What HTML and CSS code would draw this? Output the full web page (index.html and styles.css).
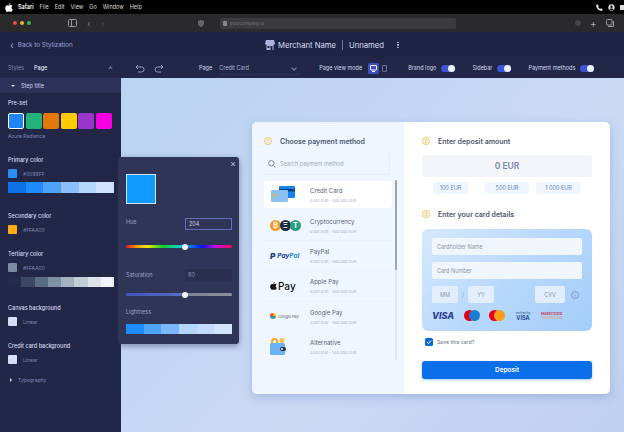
FILE: index.html
```html
<!DOCTYPE html>
<html lang="en">
<head>
    <meta charset="UTF-8">
    <title>Merchant Stylization</title>
    <link rel="stylesheet" href="styles.css">
</head>
<body>
    <!-- Mac menu bar -->
    <div class="menubar">
        <svg class="apple" width="8" height="9" viewBox="0 0 16 18"><path fill="#fff" d="M11 0c.2 1.800-1.400 3.800-3.300 3.700C7.500 2 9.200.2 11 0zM8 5c1 0 2-.9 3.600-.9 1.300 0 2.600.7 3.400 1.800-3 1.700-2.500 5.900.6 7.100-.7 1.800-2.300 4.800-4.100 4.800-1.300 0-1.700-.8-3.300-.8s-2.100.8-3.300.8C2.700 17.800.4 13.700.4 10.300c0-3.500 2.300-5.900 4.600-5.900C6.200 4.400 7.200 5 8 5z"/></svg>
        <b>Safari</b><span>File</span><span>Edit</span><span>View</span><span>Go</span><span>Window</span><span>Help</span>
        <div class="menubar-right">
            <svg width="7" height="7" viewBox="0 0 10 10"><path fill="#ddd" d="M2 0l2 3-1 1c.5 1.200 1.500 2.200 3 3l1-1 3 2-2 2C4 9.500.5 6 0 2z"/></svg>
            <svg width="7" height="7" viewBox="0 0 10 10"><circle cx="5" cy="5" r="4.500" fill="#ddd"/><circle cx="5" cy="4" r="1.700" fill="#000"/><path fill="#000" d="M2 8c1-2 5-2 6 0l-3 1z"/></svg>
            <i class="battery"></i>
        </div>
    </div>

    <!-- Browser toolbar -->
    <div class="browserbar">
        <div class="lights"><i class="red"></i><i class="yellow"></i><i class="green"></i></div>
        <svg class="b-side" width="9" height="8" viewBox="0 0 9 8"><rect x=".5" y=".5" width="8" height="7" rx="1" fill="none" stroke="#999"/><path d="M3.500 1v6" stroke="#999"/></svg>
        <span class="b-arrow">‹</span>
        <span class="b-arrow dim">›</span>
        <svg class="b-shield" width="6" height="7" viewBox="0 0 6 7"><path d="M3 0l3 1v2.500C6 5.500 4 6.500 3 7 2 6.500 0 5.500 0 3.500V1z" fill="#666"/></svg>
        <div class="address"><span class="lock"></span>yourcompany.io</div>
        <div class="b-right">
            <i class="b-dot"></i>
            <span class="b-plus">+</span>
            <svg width="8" height="8" viewBox="0 0 8 8"><rect x=".5" y=".5" width="5.500" height="5.500" rx="1" fill="none" stroke="#999"/><path d="M2 7.500h5.500V2" fill="none" stroke="#999"/></svg>
        </div>
    </div>

    <!-- App header -->
    <header class="appbar">
        <div class="back"><span class="back-arrow">‹</span>Back to Stylization</div>
        <div class="merchant">
            <svg width="10" height="10" viewBox="0 0 10 10"><path fill="#aab4e0" d="M1 0h8l1 3.500c0 1-1 1.500-1.500 1.200V10h-7V4.700C1 5 0 4.500 0 3.500z"/><rect x="2.500" y="6" width="2" height="2" fill="#1f2444"/><rect x="5.500" y="6" width="2" height="4" fill="#1f2444"/></svg>
            <span class="merchant-name">Merchant Name</span>
            <i class="merchant-sep"></i>
            <span>Unnamed</span>
            <span class="kebab"><i></i><i></i><i></i></span>
        </div>
    </header>

    <div class="workspace">
        <!-- Left sidebar -->
        <aside class="sidebar">
            <div class="tabs"><span>Styles</span><b>Page</b><em class="tab-chevron"></em></div>
            <div class="step-row"><i class="tri-down"></i>Step title</div>

            <div class="panel">
                <h4 class="first">Pre-set</h4>
                <div class="presets">
                    <i class="preset active"></i><i class="preset green"></i><i class="preset orange"></i><i class="preset yellow"></i><i class="preset purple"></i><i class="preset pink"></i>
                </div>
                <p class="preset-name">Azure Radiance</p>

                <h4 class="primary">Primary color</h4>
                <div class="color-row"><i class="chip blue"></i>#0099FF</div>
                <div class="shades">
                    <i style="background:#0b73e6"></i><i style="background:#1f8bff"></i><i style="background:#4ea3fb"></i><i style="background:#8cc0fb"></i><i style="background:#b4d6fb"></i><i style="background:#cfe3fd"></i>
                </div>

                <h4 class="secondary">Secondary color</h4>
                <div class="color-row"><i class="chip amber"></i>#FFAA00</div>

                <h4 class="tertiary">Tertiary color</h4>
                <div class="color-row"><i class="chip slate"></i>#FFAA00</div>
                <div class="shades short">
                    <i style="background:#242a4a"></i><i style="background:#3c4863"></i><i style="background:#5a6b84"></i><i style="background:#7f91a6"></i><i style="background:#a3b2c1"></i><i style="background:#c1cdd8"></i><i style="background:#dde4eb"></i><i style="background:#f1f4f8"></i>
                </div>

                <h4 class="canvas-bg">Canvas background</h4>
                <div class="color-row"><i class="chip pale"></i>Linear</div>

                <h4 class="card-bg">Credit card background</h4>
                <div class="color-row"><i class="chip pale"></i>Linear</div>

                <div class="typography"><i class="tri-right"></i>Typography</div>
            </div>
        </aside>

        <div class="main">
            <!-- Top settings row -->
            <div class="settings">
                <div class="history">
                    <svg width="10" height="9" viewBox="0 0 10 9"><path d="M3 1L1 3l2 2M1 3h5.500a2.500 2.500 0 0 1 0 5H3" fill="none" stroke="#8f98c4"/></svg>
                    <svg width="10" height="9" viewBox="0 0 10 9"><path d="M7 1l2 2-2 2M9 3H3.500a2.500 2.500 0 0 0 0 5H7" fill="none" stroke="#8f98c4"/></svg>
                </div>
                <span class="set-label page-label">Page</span>
                <div class="page-select">Credit Card<em class="select-chevron"></em></div>
                <span class="set-label">Page view mode</span>
                <div class="view-mode">
                    <span class="view-btn on"><svg width="7" height="7" viewBox="0 0 7 7"><rect x=".5" y=".5" width="6" height="4.500" rx=".5" fill="none" stroke="#fff"/><path d="M2 6.500h3" stroke="#fff"/></svg></span>
                    <span class="view-btn"><svg width="5" height="7" viewBox="0 0 5 7"><rect x=".5" y=".5" width="4" height="6" rx=".5" fill="none" stroke="#69719b"/></svg></span>
                </div>
                <span class="set-label brand">Brand logo</span><i class="toggle"></i>
                <span class="set-label side">Sidebar</span><i class="toggle"></i>
                <span class="set-label pay">Payment methods</span><i class="toggle"></i>
            </div>

            <!-- Canvas with payment card -->
            <div class="canvas">
                <div class="pay-card">
                    <section class="methods">
                        <div class="step-head"><i class="step-num">1</i>Choose payment method</div>
                        <div class="search">
                            <svg width="8" height="8" viewBox="0 0 8 8"><circle cx="3.300" cy="3.300" r="2.700" fill="none" stroke="#7d8598"/><path d="M5.300 5.300L7.500 7.500" stroke="#7d8598"/></svg>
                            Search payment method
                        </div>
                        <div class="method-wrap">
                            <ul class="method-list">
                                <li class="method selected">
                                    <span class="m-logo">
                                        <svg width="26" height="17" viewBox="0 0 26 17"><rect x="9" y="0" width="16" height="12" rx="1" fill="#1684ea"/><rect x="9" y="3" width="16" height="2.500" fill="#0b3f80"/><rect x="1" y="4" width="17" height="12" rx="1" fill="#8cc2f2"/><rect x="3" y="8" width="3" height="2.500" fill="#f5b63a"/></svg>
                                    </span>
                                    <div><p class="m-title">Credit Card</p><p class="m-sub">0.001 EUR - 500 000 EUR</p></div>
                                </li>
                                <li class="method">
                                    <span class="m-logo coins"><i class="coin btc">₿</i><i class="coin eth">Ξ</i><i class="coin usdt">T</i></span>
                                    <div><p class="m-title">Cryptocurrency</p><p class="m-sub">0.001 EUR - 500 000 EUR</p></div>
                                </li>
                                <li class="method">
                                    <span class="m-logo paypal"><b>P</b><span>Pay</span><em>Pal</em></span>
                                    <div><p class="m-title">PayPal</p><p class="m-sub">0.001 EUR - 500 000 EUR</p></div>
                                </li>
                                <li class="method">
                                    <span class="m-logo applepay">
                                        <svg width="7" height="8" viewBox="0 0 16 18"><path fill="#111" d="M11 0c.2 1.800-1.400 3.800-3.300 3.700C7.500 2 9.200.2 11 0zM8 5c1 0 2-.9 3.600-.9 1.300 0 2.600.7 3.400 1.800-3 1.700-2.500 5.900.6 7.100-.7 1.800-2.300 4.800-4.100 4.800-1.300 0-1.700-.8-3.300-.8s-2.100.8-3.300.8C2.700 17.800.4 13.700.4 10.300c0-3.500 2.300-5.900 4.600-5.900C6.200 4.400 7.200 5 8 5z"/></svg>Pay
                                    </span>
                                    <div><p class="m-title">Apple Pay</p><p class="m-sub">0.001 EUR - 500 000 EUR</p></div>
                                </li>
                                <li class="method">
                                    <span class="m-logo googlepay">
                                        <svg width="6" height="6" viewBox="0 0 6 6"><path d="M3 3L0 3a3 3 0 0 1 3-3z" fill="#ea4335"/><path d="M3 3V0a3 3 0 0 1 3 3z" fill="#fbbc05"/><path d="M3 3h3a3 3 0 0 1-3 3z" fill="#34a853"/><path d="M3 3v3a3 3 0 0 1-3-3z" fill="#4285f4"/></svg>Google Pay
                                    </span>
                                    <div><p class="m-title">Google Pay</p><p class="m-sub">0.001 EUR - 500 000 EUR</p></div>
                                </li>
                                <li class="method last">
                                    <span class="m-logo">
                                        <svg width="17" height="17" viewBox="0 0 17 17"><path d="M2 6V3.500a2.500 2.500 0 0 1 5 0V6" fill="none" stroke="#f5a623" stroke-width="2"/><circle cx="12" cy="2.500" r="2.500" fill="#f8c04a"/><rect x="0" y="5" width="15" height="12" rx="1.500" fill="#6db3f2"/><rect x="10" y="9" width="6" height="4" rx="2" fill="#26324d"/><circle cx="12" cy="11" r="1" fill="#fff"/></svg>
                                    </span>
                                    <div><p class="m-title">Alternative</p><p class="m-sub">0.001 EUR - 500 000 EUR</p></div>
                                </li>
                            </ul>
                            <i class="scroll-track"></i>
                        </div>
                    </section>

                    <section class="deposit">
                        <div class="step-head"><i class="step-num">2</i>Enter deposit amount</div>
                        <div class="amount">0 EUR</div>
                        <div class="quick">
                            <span class="q-100">100 EUR</span><span class="q-500">500 EUR</span><span class="q-1000">1 000 EUR</span>
                        </div>
                        <div class="step-head details"><i class="step-num">3</i>Enter your card details</div>
                        <div class="card-form">
                            <div class="field">Cardholder Name</div>
                            <div class="field">Card Number</div>
                            <div class="field-row">
                                <span class="field small">MM</span>
                                <i class="slash">/</i>
                                <span class="field small">YY</span>
                                <span class="field cvv">CVV</span>
                                <svg width="8" height="8" viewBox="0 0 8 8"><circle cx="4" cy="4" r="3.500" fill="none" stroke="#6d8fb8" stroke-width=".8"/><path d="M4 2.500v.5M4 4v1.500" stroke="#6d8fb8" stroke-width=".8"/></svg>
                            </div>
                            <div class="brands">
                                <span class="visa">VISA</span>
                                <span class="mc"><i class="r"></i><i class="b"></i></span>
                                <span class="mc"><i class="r"></i><i class="o"></i></span>
                                <span class="vbv"><small>verified by</small>VISA</span>
                                <span class="msc"><b>Mastercard</b><small>SecureCode</small></span>
                            </div>
                        </div>
                        <label class="save">
                            <span class="check"><svg width="6" height="6" viewBox="0 0 6 6"><path d="M1 3l1.500 1.500L5 1.500" fill="none" stroke="#fff"/></svg></span>
                            Save this card?
                        </label>
                        <button class="deposit-btn">Deposit</button>
                    </section>
                </div>
            </div>
        </div>

        <!-- Color picker popover -->
        <div class="picker">
            <span class="picker-close">×</span>
            <div class="picker-swatch"></div>
            <div class="picker-row hue-row"><span class="hue-name">Hue</span><span class="picker-input active">204</span></div>
            <div class="slider hue"><i class="thumb hue-thumb"></i></div>
            <div class="picker-row sat-row"><span>Saturation</span><span class="picker-input">80</span></div>
            <div class="slider sat"><i class="thumb sat-thumb"></i></div>
            <div class="light-label">Lightness</div>
            <div class="shades light">
                <i style="background:#1f8bff"></i><i style="background:#4ea3fb"></i><i style="background:#7ab8fb"></i><i style="background:#b4d6fb"></i><i style="background:#c3dcfc"></i><i style="background:#d2e5fd"></i>
            </div>
        </div>
    </div>
</body>
</html>
```

FILE: styles.css
```css
/* General */
* {
    box-sizing: border-box;
}

html, body {
    margin: 0;
    padding: 0;
    height: 432px;
    overflow: hidden;
}

body {
    width: 624px;
    font-family: 'Inter', 'Liberation Sans', sans-serif;
    background: #1f2444;
    color: #fff;
    display: flex;
    flex-direction: column;
}

p, h4, ul {
    margin: 0;
    padding: 0;
}

i, em {
    display: block;
    font-style: normal;
}

/* Mac menu bar */
.menubar {
    height: 14px;
    background: #000;
    display: flex;
    align-items: center;
    padding: 0 0 0 5px;
    font-size: 5.500px;
    color: #ddd;
    gap: 6px;
    flex-shrink: 0;
}

.apple {
    margin-right: -1px;
}

.menubar b {
    font-weight: 600;
    color: #fff;
}

.menubar-right {
    margin-left: auto;
    display: flex;
    align-items: center;
    gap: 5px;
}

.battery {
    width: 4px;
    height: 5px;
    background: #ddd;
}

/* Browser bar */
.browserbar {
    height: 18px;
    background: #2a2a2c;
    display: flex;
    align-items: center;
    padding-left: 13px;
    flex-shrink: 0;
}

.lights {
    display: flex;
    gap: 3px;
    width: 55px;
}

.lights i {
    width: 4px;
    height: 4px;
    border-radius: 50%;
}

.lights .red { background: #e5534b; }
.lights .yellow { background: #e6b52e; }
.lights .green { background: #38b559; }

.b-arrow {
    font-size: 9px;
    color: #777;
    margin-left: 10px;
    width: 4px;
    line-height: 9px;
}

.b-arrow.dim {
    color: #555;
}

.b-shield {
    margin-left: 93px;
}

.address {
    margin-left: 16px;
    width: 236px;
    height: 11px;
    background: #3b3b3d;
    border-radius: 2px;
    font-size: 4.500px;
    color: #777;
    display: flex;
    align-items: center;
    padding-left: 3px;
    gap: 3px;
}

.lock {
    width: 4px;
    height: 5px;
    background: #888;
    border-radius: 1px;
}

.b-right {
    margin-left: 119px;
    display: flex;
    align-items: center;
    gap: 9px;
}

.b-dot {
    width: 6px;
    height: 6px;
    border-radius: 50%;
    background: #444;
}

.b-plus {
    font-size: 10px;
    line-height: 10px;
    color: #aaa;
}

/* App header */
.appbar {
    height: 26px;
    display: flex;
    align-items: center;
    background: #1f2444;
    flex-shrink: 0;
    position: relative;
}

.back {
    font-size: 6.300px;
    color: #98a3d6;
    padding-left: 10px;
    width: 265px;
    display: flex;
    align-items: center;
    gap: 4px;
    flex-shrink: 0;
}

.back-arrow {
    font-size: 10px;
    line-height: 8px;
}

.merchant {
    display: flex;
    align-items: center;
    font-size: 7.700px;
    color: #d9ddf0;
}

.merchant-name {
    margin-left: 3px;
}

.merchant-sep {
    width: 1px;
    height: 10px;
    background: #6f77a3;
    margin: 0 6px;
}

.kebab {
    margin-left: 13px;
    display: flex;
    flex-direction: column;
    gap: 1px;
}

.kebab i {
    width: 1.500px;
    height: 1.500px;
    background: #9aa2cc;
}

/* Workspace */
.workspace {
    flex: 1;
    display: flex;
    position: relative;
    min-height: 0;
}

.sidebar {
    width: 121px;
    background: #222748;
    flex-shrink: 0;
}

.tabs {
    height: 20px;
    display: flex;
    align-items: center;
    padding: 0 8px;
    font-size: 5.500px;
    color: #7f88b4;
    gap: 10px;
}

.tabs b {
    color: #dfe3f5;
    font-weight: 500;
}

.tab-chevron {
    margin-left: auto;
    margin-right: 1px;
    width: 3px;
    height: 3px;
    border-left: 1px solid #7f88b4;
    border-top: 1px solid #7f88b4;
    transform: rotate(45deg);
}

.step-row {
    height: 15px;
    background: #2d3358;
    display: flex;
    align-items: center;
    font-size: 5.500px;
    padding-left: 11px;
    color: #cdd2ec;
    gap: 6px;
}

.tri-down {
    border: 2px solid transparent;
    border-top: 2.500px solid #ddd;
    border-bottom: 0;
}

.tri-right {
    border: 2px solid transparent;
    border-left: 2.500px solid #ddd;
    border-right: 0;
}

.panel {
    padding: 0 8px;
}

.panel h4 {
    font-size: 5.500px;
    line-height: 7px;
    font-weight: 500;
    color: #d6daef;
}

.panel h4.first { margin-top: 7px; }
.panel h4.primary { margin-top: 17px; }
.panel h4.secondary { margin-top: 20px; }
.panel h4.tertiary { margin-top: 17px; }
.panel h4.canvas-bg { margin-top: 18px; }
.panel h4.card-bg { margin-top: 17px; }

.presets {
    display: flex;
    gap: 1.500px;
    margin-top: 6px;
}

.preset {
    width: 16px;
    height: 16px;
    border-radius: 2px;
}

.preset.active { background: #1f85f5; border: 1px solid #fff; }
.preset.green { background: #22b27c; }
.preset.orange { background: #e5780c; }
.preset.yellow { background: #ffcb05; }
.preset.purple { background: #9a35c9; }
.preset.pink { background: #f500e0; }

.preset-name {
    font-size: 5px;
    line-height: 7px;
    margin-top: 4px;
    color: #7f88b4;
}

.color-row {
    display: flex;
    align-items: center;
    gap: 6px;
    font-size: 5px;
    color: #8088b3;
    margin-top: 5px;
    height: 9px;
}

.chip {
    width: 9px;
    height: 9px;
    border-radius: 1px;
    flex-shrink: 0;
}

.chip.blue { background: #2a8df5; }
.chip.amber { background: #ffaa17; }
.chip.slate { background: #7a8aa3; }
.chip.pale { background: #d4def5; }

.shades {
    display: flex;
    height: 11px;
    margin-top: 4px;
    width: 106px;
}

.shades i {
    flex: 1;
}

.shades.short {
    height: 10px;
    margin-top: 5px;
}

.typography {
    display: flex;
    align-items: center;
    gap: 6px;
    font-size: 5px;
    color: #7f88b4;
    margin-top: 13px;
    padding-left: 2px;
}

/* Settings row */
.main {
    flex: 1;
    display: flex;
    flex-direction: column;
    min-width: 0;
}

.settings {
    height: 20px;
    background: #222748;
    display: flex;
    align-items: center;
    font-size: 5.500px;
    color: #d3d7ee;
    padding-left: 14px;
    flex-shrink: 0;
}

.history {
    display: flex;
    gap: 9px;
    width: 64px;
}

.page-select {
    margin-left: 7px;
    width: 81px;
    height: 14px;
    display: flex;
    align-items: center;
    color: #a8afd6;
    margin-right: 19px;
    border-bottom: 1px solid #2c3258;
}

.select-chevron {
    margin-left: auto;
    margin-right: 4px;
    width: 4px;
    height: 4px;
    border-right: 1px solid #7f88b4;
    border-bottom: 1px solid #7f88b4;
    transform: rotate(45deg);
}

.view-mode {
    display: flex;
    margin-left: 6px;
    margin-right: 18px;
}

.view-btn {
    width: 11px;
    height: 11px;
    display: flex;
    align-items: center;
    justify-content: center;
    border-radius: 1.500px;
}

.view-btn.on {
    background: #3c4fbf;
}

.toggle {
    width: 14px;
    height: 7px;
    border-radius: 4px;
    background: #3f55d6;
    margin-left: 5px;
    position: relative;
    margin-right: 17px;
}

.toggle::after {
    content: "";
    position: absolute;
    right: 0;
    top: 0;
    width: 7px;
    height: 7px;
    background: #eef1ff;
    border-radius: 50%;
}

/* Canvas */
.canvas {
    flex: 1;
    background: linear-gradient(135deg, #b9d4f2, #cbd9f3 60%, #bfd0ef);
    padding: 44px 14px 0 131px;
    min-height: 0;
}

.pay-card {
    width: 358px;
    height: 272px;
    border-radius: 5px;
    background: #fff;
    display: flex;
    overflow: hidden;
    box-shadow: 0 3px 10px rgba(90, 130, 200, 0.35);
}

.methods {
    width: 152px;
    background: #eff6ff;
    padding: 14px 0 0 12px;
}

.step-head {
    display: flex;
    align-items: center;
    gap: 8px;
    font-size: 7px;
    font-weight: 600;
    color: #4d5672;
    height: 10px;
}

.step-num {
    width: 8px;
    height: 8px;
    border-radius: 50%;
    border: 1px solid #f6c256;
    color: #f0a92c;
    font-size: 4.500px;
    font-weight: 500;
    display: flex;
    align-items: center;
    justify-content: center;
}

.search {
    width: 126px;
    height: 22px;
    margin-top: 7px;
    display: flex;
    align-items: center;
    gap: 4px;
    font-size: 5.500px;
    color: #a2aabd;
    padding-left: 4px;
    border-bottom: 1px solid #e8eff9;
    border-right: 1px solid #e8eff9;
}

.method-wrap {
    display: flex;
    margin-top: 6px;
}

.method-list {
    list-style: none;
    width: 128px;
}

.method {
    height: 30.200px;
    display: flex;
    align-items: center;
    border-bottom: 1px solid #ebf2fc;
    color: #5a6278;
}

.method.selected {
    background: #fff;
    border-radius: 3px;
    height: 27px;
    margin-bottom: 3px;
    border-bottom: 0;
}

.method.last {
    border-bottom: 0;
}

.m-logo {
    width: 46px;
    padding-left: 6px;
    display: flex;
    align-items: center;
    flex-shrink: 0;
}

.m-title {
    font-size: 6px;
    line-height: 9px;
    color: #5a6278;
}

.m-sub {
    font-size: 3.800px;
    line-height: 5px;
    margin-top: 3px;
    color: #a9b0c2;
}

.coins .coin {
    width: 11px;
    height: 11px;
    border-radius: 50%;
    margin-right: -1px;
    font-size: 7px;
    font-weight: 700;
    color: #fff;
    display: flex;
    align-items: center;
    justify-content: center;
}

.coin.btc { background: #f29a26; }
.coin.eth { background: #1f2a44; }
.coin.usdt { background: #2a9d84; }

.paypal {
    font-size: 6.500px;
    font-weight: 700;
    font-style: italic;
    color: #1b3a8a;
}

.paypal b {
    font-size: 8px;
    margin-right: 2px;
}

.paypal em {
    color: #2a8bd8;
    font-style: italic;
}

.applepay {
    font-size: 10px;
    font-weight: 500;
    color: #111;
    gap: 1px;
}

.googlepay {
    font-size: 3.800px;
    color: #666;
    gap: 2px;
}

.scroll-track {
    width: 2px;
    height: 180px;
    background: #dde6f2;
    margin-left: 3px;
    margin-top: -1px;
    border-radius: 1px;
    position: relative;
}

.scroll-track::before {
    content: "";
    position: absolute;
    left: 0;
    top: 0;
    width: 2px;
    height: 90px;
    background: #9aa5b8;
    border-radius: 1px;
}

/* Deposit column */
.deposit {
    flex: 1;
    padding: 14px 18px 0 18px;
}

.amount {
    height: 22px;
    margin-top: 9px;
    background: #f3f5f8;
    border-radius: 2px;
    display: flex;
    align-items: center;
    justify-content: center;
    font-size: 8.500px;
    font-weight: 600;
    color: #7c89a8;
}

.quick {
    display: flex;
    margin-top: 5px;
    padding-left: 11px;
    font-size: 5.500px;
    color: #5f85b8;
}

.quick span {
    height: 12px;
    background: #f0f6fd;
    border-radius: 2px;
    display: flex;
    align-items: center;
    justify-content: center;
}

.q-100 { width: 35px; margin-right: 17px; }
.q-500 { width: 44px; margin-right: 7px; }
.q-1000 { width: 45px; }

.step-head.details {
    margin-top: 15px;
}

.card-form {
    height: 102px;
    margin-top: 10px;
    border-radius: 6px;
    background: linear-gradient(135deg, #d6e9fd, #b6d7fb 55%, #a4cdfa);
    padding: 9px 10px 0;
}

.field {
    height: 17px;
    background: #f1f6fc;
    border-radius: 2px;
    display: flex;
    align-items: center;
    padding-left: 5px;
    font-size: 5.500px;
    color: #8e97a8;
    margin-bottom: 7px;
}

.field-row {
    display: flex;
    align-items: center;
}

.field.small {
    width: 26px;
    justify-content: center;
    padding: 0;
    margin: 0;
    background: #e2eefb;
}

.slash {
    width: 10px;
    text-align: center;
    font-size: 7px;
    color: #8eabd0;
}

.field.cvv {
    width: 30px;
    justify-content: center;
    padding: 0;
    margin: 0 6px 0 41px;
    background: #e2eefb;
}

.brands {
    display: flex;
    align-items: center;
    margin-top: 5px;
    height: 15px;
}

.visa {
    font-size: 9px;
    font-weight: 800;
    font-style: italic;
    color: #2c3f96;
    width: 32px;
}

.mc {
    display: flex;
    width: 25px;
}

.mc i {
    width: 11px;
    height: 11px;
    border-radius: 50%;
}

.mc .r { background: #e3001b; }
.mc .b { background: #1a7ed0; margin-left: -6px; }
.mc .o { background: #f79e1b; margin-left: -6px; }

.vbv {
    display: flex;
    flex-direction: column;
    align-items: center;
    font-size: 5.500px;
    font-weight: 700;
    color: #2c4a96;
    line-height: 6px;
    width: 18px;
}

.vbv small {
    font-size: 3px;
    font-weight: 400;
    line-height: 4px;
}

.msc {
    display: flex;
    flex-direction: column;
    font-size: 3.800px;
    line-height: 4px;
    margin-left: 9px;
    color: #c2476b;
}

.msc small {
    font-size: 3.800px;
    color: #e09a7d;
}

.save {
    display: flex;
    align-items: center;
    gap: 4px;
    margin: 7px 0 0 3px;
    font-size: 5.200px;
    color: #6b7386;
}

.check {
    width: 8px;
    height: 8px;
    border-radius: 1.500px;
    background: #1168d8;
    display: flex;
    align-items: center;
    justify-content: center;
}

.deposit-btn {
    display: block;
    width: 100%;
    height: 18px;
    margin-top: 15px;
    background: #0a6fe8;
    border: 0;
    border-radius: 3px;
    color: #fff;
    font-family: inherit;
    font-size: 6.500px;
    font-weight: 600;
    box-shadow: 0 1px 3px rgba(10, 111, 232, 0.4);
}

/* Color picker */
.picker {
    position: absolute;
    left: 118px;
    top: 99px;
    width: 121px;
    height: 187px;
    background: #2f3556;
    border-radius: 3px;
    padding: 17px 7px 0 8px;
    box-shadow: 0 2px 6px rgba(30, 40, 80, 0.45);
    font-size: 5.500px;
    color: #9aa2c8;
}

.picker-close {
    position: absolute;
    right: 3px;
    top: 1px;
    font-size: 9px;
    line-height: 11px;
    color: #b4bad8;
}

.picker-swatch {
    width: 30px;
    height: 30px;
    background: #0f9bff;
    border: 1px solid #cfe6ff;
}

.picker-row {
    display: flex;
    justify-content: space-between;
    align-items: center;
}

.picker-input {
    width: 47px;
    height: 12px;
    display: flex;
    align-items: center;
    padding-left: 3px;
    background: #2a2f4e;
    color: #8d95ba;
}

.picker-input.active {
    border: 1px solid #5f6cb8;
    background: #2f3556;
    color: #c9cee8;
}

.hue-row {
    margin-top: 14px;
}

.hue-name {
    margin-bottom: 5px;
}

.slider {
    height: 3px;
    border-radius: 2px;
    position: relative;
}

.slider.hue {
    margin-top: 15px;
    background: linear-gradient(90deg, #e8101e, #f89a10 10%, #f0e810 20%, #10d030 35%, #10d0d0 50%, #0a9af0 57%, #0810f0 72%, #d008e0 85%, #f00850);
}

.sat-row {
    margin-top: 21px;
}

.slider.sat {
    margin-top: 12px;
    background: linear-gradient(90deg, #3f55b8, #5a6cc0 55%, #7d8496 60%, #8a8f9a);
}

.thumb {
    position: absolute;
    width: 6px;
    height: 6px;
    top: -1.500px;
    background: #f4f6ff;
    border-radius: 50%;
}

.hue-thumb { left: 56px; }
.sat-thumb { left: 56px; }

.light-label {
    margin-top: 13px;
}

.shades.light {
    height: 10px;
    margin-top: 9px;
    width: 106px;
}
```
